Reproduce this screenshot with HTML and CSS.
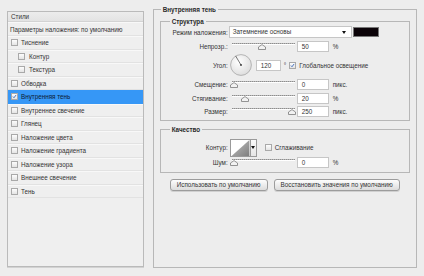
FILE: index.html
```html
<!DOCTYPE html>
<html lang="ru">

<head>
    <meta charset="UTF-8">
    <title>Стиль слоя</title>
    <link rel="stylesheet" href="styles.css">
</head>

<body>
    <div class="dialog">
        <!-- list of layer styles -->
        <aside class="styles">
            <div class="styles-head">Стили</div>
            <div class="styles-item blend">Параметры наложения: по умолчанию</div>
            <div class="styles-item"><span class="cb"></span>Тиснение</div>
            <div class="styles-item sub"><span class="cb"></span>Контур</div>
            <div class="styles-item sub"><span class="cb"></span>Текстура</div>
            <div class="styles-item"><span class="cb"></span>Обводка</div>
            <div class="styles-item active">
                <span class="cb checked"><svg viewBox="0 0 7 7"><path d="M1.3 3.6 L2.8 5.2 L5.8 1.3" /></svg></span>Внутренняя тень
            </div>
            <div class="styles-item"><span class="cb"></span>Внутреннее свечение</div>
            <div class="styles-item"><span class="cb"></span>Глянец</div>
            <div class="styles-item"><span class="cb"></span>Наложение цвета</div>
            <div class="styles-item"><span class="cb"></span>Наложение градиента</div>
            <div class="styles-item"><span class="cb"></span>Наложение узора</div>
            <div class="styles-item"><span class="cb"></span>Внешнее свечение</div>
            <div class="styles-item"><span class="cb"></span>Тень</div>
        </aside>

        <!-- settings of the selected style -->
        <fieldset class="group main">
            <legend>Внутренняя тень</legend>

            <fieldset class="group struct">
                <legend>Структура</legend>

                <div class="row">
                    <span class="lbl">Режим наложения:</span>
                    <div class="select">Затемнение основы<span class="arrow"></span></div>
                    <span class="swatch"></span>
                </div>

                <div class="row r-opacity">
                    <span class="lbl">Непрозр.:</span>
                    <div class="slider">
                        <span class="track"></span>
                        <svg class="thumb" style="left: 48%" viewBox="0 0 8 6"><path d="M0.5 5.5 V3 L4 0.6 L7.5 3 V5.5 Z" /></svg>
                    </div>
                    <span class="field">50</span>
                    <span class="unit">%</span>
                </div>

                <div class="row r-angle">
                    <span class="lbl">Угол:</span>
                    <svg class="dial" viewBox="0 0 22 22">
                        <defs>
                            <radialGradient id="dialFill" cx="40%" cy="35%" r="70%">
                                <stop offset="0" stop-color="#ffffff" />
                                <stop offset="1" stop-color="#dcdcdc" />
                            </radialGradient>
                        </defs>
                        <circle cx="11" cy="11" r="10.4" fill="url(#dialFill)" stroke="#a6a6a6" stroke-width="0.8" />
                        <line x1="11" y1="11" x2="5.6" y2="1.9" stroke="#555" stroke-width="0.8" />
                        <circle cx="11" cy="11" r="0.9" fill="#333" />
                    </svg>
                    <span class="field short">120</span>
                    <span class="deg">°</span>
                    <span class="cb checked"><svg viewBox="0 0 7 7"><path d="M1.3 3.6 L2.8 5.2 L5.8 1.3" /></svg></span>
                    <span class="cb-text">Глобальное освещение</span>
                </div>

                <div class="row r-distance">
                    <span class="lbl">Смещение:</span>
                    <div class="slider">
                        <span class="track"></span>
                        <svg class="thumb" style="left: 4%" viewBox="0 0 8 6"><path d="M0.5 5.5 V3 L4 0.6 L7.5 3 V5.5 Z" /></svg>
                    </div>
                    <span class="field">0</span>
                    <span class="unit">пикс.</span>
                </div>

                <div class="row r-choke">
                    <span class="lbl">Стягивание:</span>
                    <div class="slider">
                        <span class="track"></span>
                        <svg class="thumb" style="left: 21%" viewBox="0 0 8 6"><path d="M0.5 5.5 V3 L4 0.6 L7.5 3 V5.5 Z" /></svg>
                    </div>
                    <span class="field">20</span>
                    <span class="unit">%</span>
                </div>

                <div class="row r-size">
                    <span class="lbl">Размер:</span>
                    <div class="slider">
                        <span class="track"></span>
                        <svg class="thumb" style="left: 96%" viewBox="0 0 8 6"><path d="M0.5 5.5 V3 L4 0.6 L7.5 3 V5.5 Z" /></svg>
                    </div>
                    <span class="field">250</span>
                    <span class="unit">пикс.</span>
                </div>
            </fieldset>

            <fieldset class="group quality">
                <legend>Качество</legend>

                <div class="row r-contour">
                    <span class="lbl">Контур:</span>
                    <div class="contour">
                        <svg class="contour-pic" viewBox="0 0 19 17">
                            <defs>
                                <linearGradient id="contourFill" x1="0" y1="0" x2="1" y2="1">
                                    <stop offset="0" stop-color="#c4c4c4" />
                                    <stop offset="1" stop-color="#7e7e7e" />
                                </linearGradient>
                            </defs>
                            <rect width="19" height="17" fill="#ffffff" />
                            <path d="M0 17 L19 0 V17 Z" fill="url(#contourFill)" />
                        </svg>
                        <span class="contour-drop"><span class="arrow"></span></span>
                    </div>
                    <span class="cb anti"></span>
                    <span class="cb-text">Сглаживание</span>
                </div>

                <div class="row r-noise">
                    <span class="lbl">Шум:</span>
                    <div class="slider">
                        <span class="track"></span>
                        <svg class="thumb" style="left: 4%" viewBox="0 0 8 6"><path d="M0.5 5.5 V3 L4 0.6 L7.5 3 V5.5 Z" /></svg>
                    </div>
                    <span class="field">0</span>
                    <span class="unit">%</span>
                </div>
            </fieldset>

            <div class="buttons">
                <button type="button" class="btn btn-default">Использовать по умолчанию</button>
                <button type="button" class="btn btn-reset">Восстановить значения по умолчанию</button>
            </div>
        </fieldset>
    </div>
</body>

</html>
```

FILE: styles.css
```css
* {
    margin: 0;
    padding: 0;
    box-sizing: border-box;
}

html {
    background-color: #ededed;
    color: #333333;
    font-family: 'Liberation Sans', 'Arial', sans-serif;
    font-size: 6.3px;
}

body {
    width: 424px;
    height: 276px;
    overflow: hidden;
}

.dialog {
    display: flex;
    align-items: flex-start;
    gap: 9px;
    padding: 5px 7px 0 7px;
}

/* left list */

.styles {
    width: 137px;
    height: 256px;
    margin-top: 6px;
    border: 1px solid #bababa;
    background-color: #efefef;
    box-shadow: 0 1px 0 #d2d2d2;
}

.styles-head {
    height: 10px;
    line-height: 9px;
    padding-left: 3px;
    background: linear-gradient(#ececec, #e3e3e3);
    border-bottom: 1px solid #d3d3d3;
}

.styles-item {
    display: flex;
    align-items: center;
    height: 13.5px;
    padding-left: 3px;
    border-top: 1px solid #f8f8f8;
    border-bottom: 1px solid #e2e2e2;
}

.styles-item.blend {
    height: 14px;
    padding-left: 2px;
}

.styles-item.sub {
    padding-left: 10px;
}

.styles-item.sub .cb {
    margin-right: 4px;
}

.styles-item.active {
    background-color: #3697f6;
    border-color: #3697f6;
    color: #0c1c33;
}

.styles-item .cb {
    margin-right: 3px;
}

.cb {
    display: inline-block;
    flex: none;
    width: 7px;
    height: 7px;
    border: 1px solid #a9a9a9;
    background: linear-gradient(#fdfdfd, #e4e4e4);
}

.cb svg {
    display: block;
    width: 100%;
    height: 100%;
}

.cb path {
    fill: none;
    stroke: #2c5fb8;
    stroke-width: 1.2;
}

/* groups */

.group {
    border: 1px solid #b7b7b7;
}

.group legend {
    font-weight: bold;
    color: #2a2a2a;
    line-height: 9px;
    padding: 0 2px;
}

.main {
    width: 265px;
    height: 263px;
    padding: 0 6px;
}

.main > legend {
    margin-left: 1px;
}

.struct {
    margin-top: 2.5px;
    padding: 0.5px 0 2.5px;
}

.struct > legend,
.quality > legend {
    margin-left: 9px;
}

.quality {
    margin-top: 4px;
    padding: 0 0 4px;
}

.row {
    display: flex;
    align-items: center;
    height: 12px;
}

.lbl {
    width: 67px;
    text-align: right;
    flex: none;
}

.r-opacity {
    margin-top: 2px;
}

.r-angle {
    height: 22px;
    margin-top: 2px;
}

.r-distance {
    margin-top: 2.5px;
}

.r-choke,
.r-size {
    margin-top: 1.5px;
}

.r-contour {
    height: 18px;
    margin-top: 4.5px;
}

.r-noise {
    height: 10px;
    margin-top: 1px;
}

/* controls */

.select {
    position: relative;
    width: 123px;
    height: 12px;
    margin-left: 1px;
    padding-left: 3px;
    line-height: 10px;
    background-color: #ffffff;
    border: 1px solid #c6c6c6;
}

.arrow {
    display: block;
    width: 0;
    height: 0;
    border-left: 2.5px solid transparent;
    border-right: 2.5px solid transparent;
    border-top: 3px solid #111;
}

.select .arrow {
    position: absolute;
    right: 5px;
    top: 3.5px;
}

.swatch {
    width: 26px;
    height: 10px;
    margin-left: 1px;
    background-color: #0b0308;
    border: 1px solid #777;
}

.slider {
    position: relative;
    width: 63px;
    height: 12px;
    margin-left: 4px;
}

.track {
    position: absolute;
    left: 0;
    right: 0;
    top: 2.5px;
    height: 2px;
    background: repeating-linear-gradient(90deg, #8e8e8e 0 1px, #b8b8b8 1px 2px);
    border-bottom: 0.5px solid #ffffff;
}

.thumb {
    position: absolute;
    top: 3.5px;
    width: 8px;
    height: 6px;
    margin-left: -4px;
}

.thumb path {
    fill: #f2f2f2;
    stroke: #7b7b7b;
    stroke-width: 0.8;
}

.field {
    width: 32px;
    height: 11px;
    margin-left: 2px;
    padding-left: 4px;
    line-height: 9px;
    background-color: #ffffff;
    border: 1px solid #c6c6c6;
}

.field.short {
    width: 25px;
    margin-left: 4px;
}

.unit {
    margin-left: 4px;
}

.dial {
    width: 22px;
    height: 22px;
    margin-left: 2px;
}

.deg {
    margin-left: 3px;
}

.r-angle .cb {
    margin-left: 3px;
}

.cb-text {
    margin-left: 3px;
}

.contour {
    display: flex;
    height: 18px;
    margin-left: 2px;
    border: 1px solid #9a9a9a;
    background-color: #ffffff;
}

.contour-pic {
    width: 19px;
    height: 16px;
    display: block;
}

.contour-drop {
    display: flex;
    align-items: center;
    justify-content: center;
    width: 6px;
    border-left: 1px solid #9a9a9a;
    background: linear-gradient(#fafafa, #e6e6e6);
}

.cb.anti {
    margin-left: 8px;
}

/* buttons */

.buttons {
    display: flex;
    gap: 6px;
    margin: 6px 0 0 10px;
}

.btn {
    height: 12px;
    border: 1px solid #9c9c9c;
    border-radius: 3px;
    background: linear-gradient(#fdfdfd, #dcdcdc);
    color: #333333;
    font-family: inherit;
    font-size: 100%;
    box-shadow: 0 1px 0 #d0d0d0;
}

.btn-default {
    width: 98px;
}

.btn-reset {
    width: 126px;
}
```
